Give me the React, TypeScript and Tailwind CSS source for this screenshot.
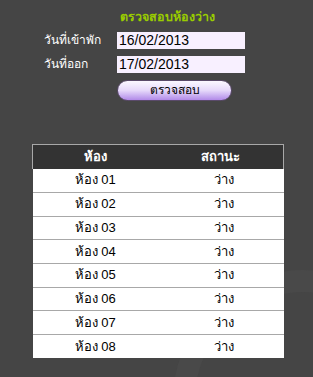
import { useState } from "react";

type Room = {
  name: string,
  status: string,
}

const rooms: Room[] = [
  { name: "ห้อง 01", status: "ว่าง" },
  { name: "ห้อง 02", status: "ว่าง" },
  { name: "ห้อง 03", status: "ว่าง" },
  { name: "ห้อง 04", status: "ว่าง" },
  { name: "ห้อง 05", status: "ว่าง" },
  { name: "ห้อง 06", status: "ว่าง" },
  { name: "ห้อง 07", status: "ว่าง" },
  { name: "ห้อง 08", status: "ว่าง" },
];

const App = () => {
  const [checkIn, setCheckIn] = useState("16/02/2013");
  const [checkOut, setCheckOut] = useState("17/02/2013");

  return (
    <div
      className="relative min-h-[377px] w-full overflow-hidden bg-[#454545] font-['Liberation_Sans','DejaVu_Sans',sans-serif]"
    >
      {/* background swirl */}
      <div className="pointer-events-none absolute -right-[120px] top-[270px] h-[260px] w-[260px] rounded-full border-[22px] border-[#494949]"></div>

      <div className="relative flex flex-col">
        <h1 className="mt-[9px] w-[334px] text-center text-[12.5px] font-bold leading-[16px] text-[#99cc00]">
          ตรวจสอบห้องว่าง
        </h1>

        {/* form */}
        <div className="mt-[7px] flex flex-col gap-[7px] pl-[44px]">
          <div className="flex items-center">
            <label className="w-[73px] text-[12px] leading-[17px] text-white">วันที่เข้าพัก</label>
            <input
              value={checkIn}
              onChange={(e) => setCheckIn(e.target.value)}
              className="h-[17px] w-[128px] bg-[#f8f0ff] px-[2px] text-[14px] leading-[17px] text-black outline-none"
            />
          </div>
          <div className="flex items-center">
            <label className="w-[73px] text-[12px] leading-[17px] text-white">วันที่ออก</label>
            <input
              value={checkOut}
              onChange={(e) => setCheckOut(e.target.value)}
              className="h-[17px] w-[128px] bg-[#f8f0ff] px-[2px] text-[14px] leading-[17px] text-black outline-none"
            />
          </div>
          <div className="flex">
            <div className="w-[73px]"></div>
            <button className="h-[21px] w-[115px] rounded-full border border-[#5a4a6a] bg-gradient-to-b from-[#fbf8ff] via-[#e6d8fa] to-[#b28ae8] text-[12px] leading-[19px] text-black">
              ตรวจสอบ
            </button>
          </div>
        </div>

        {/* rooms table */}
        <div className="ml-[32px] mt-[43px] w-[252px]">
          <table className="w-full border-collapse">
            <thead>
              <tr className="h-[24px] bg-[#333333]">
                <th className="w-1/2 border-l border-t border-[#a8a8a8] text-[13px] font-bold leading-[16px] text-white">ห้อง</th>
                <th className="w-1/2 border-r border-t border-[#a8a8a8] text-[13px] font-bold leading-[16px] text-white">สถานะ</th>
              </tr>
            </thead>
            <tbody className="bg-white">
              {rooms.map((room, i) => {
                return (
                  <tr key={room.name} className={i === 0 ? "h-[24px]" : "h-[23.7px] border-t border-[#a8a8a8]"}>
                    <td className="text-center text-[13px] leading-[16px] text-black">{room.name}</td>
                    <td className="pl-[6px] text-center text-[13px] leading-[16px] text-black">{room.status}</td>
                  </tr>
                )
              })}
            </tbody>
          </table>
        </div>
      </div>
    </div>
  );
};

export default App;
